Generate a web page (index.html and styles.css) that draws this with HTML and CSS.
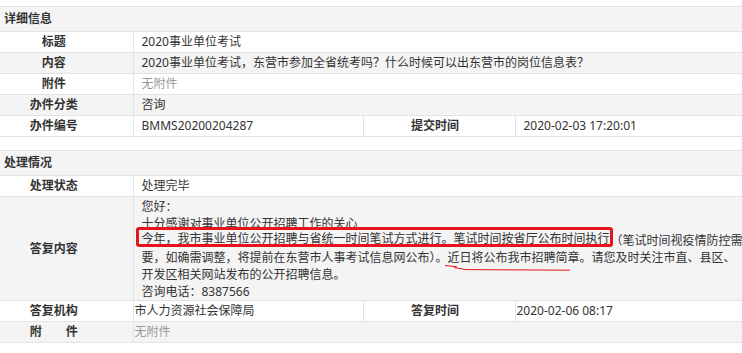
FILE: index.html
```html
<!DOCTYPE html>
<html lang="zh-CN">
<head>
  <meta charset="UTF-8" />
  <title>办件详情</title>
  <meta name="viewport" content="width=device-width, initial-scale=1.0" />
  <link rel="stylesheet" href="styles.css">
</head>
<body>

  <!-- 详细信息 -->
  <table class="grid">
    <colgroup>
      <col class="col-label"><col class="col-value"><col class="col-label2"><col>
    </colgroup>
    <tr class="head"><th colspan="4">详细信息</th></tr>
    <tr>
      <td class="label">标题</td>
      <td colspan="3">2020事业单位考试</td>
    </tr>
    <tr class="alt">
      <td class="label">内容</td>
      <td colspan="3">2020事业单位考试，东营市参加全省统考吗？什么时候可以出东营市的岗位信息表？</td>
    </tr>
    <tr>
      <td class="label">附件</td>
      <td colspan="3" class="muted">无附件</td>
    </tr>
    <tr class="alt">
      <td class="label">办件分类</td>
      <td colspan="3">咨询</td>
    </tr>
    <tr>
      <td class="label">办件编号</td>
      <td>BMMS20200204287</td>
      <td class="label2">提交时间</td>
      <td>2020-02-03 17:20:01</td>
    </tr>
  </table>

  <!-- 处理情况 -->
  <table class="grid second">
    <colgroup>
      <col class="col-label"><col class="col-value"><col class="col-label2"><col>
    </colgroup>
    <tr class="head"><th colspan="4">处理情况</th></tr>
    <tr>
      <td class="label">处理状态</td>
      <td colspan="3">处理完毕</td>
    </tr>
    <tr class="alt">
      <td class="label">答复内容</td>
      <td colspan="3" class="reply">您好：<br>十分感谢对事业单位公开招聘工作的关心<br><span class="mark">今年，我市事业单位公开招聘与省统一时间笔试方式进行。笔试时间按省厅公布时间执行</span>（笔试时间视疫情防控需<br>要，如确需调整，将提前在东营市人事考试信息网公布）。<span class="scribble">近日将公布我市招聘简章<svg class="scribble-line" width="130" height="10" viewBox="0 0 130 10"><path d="M1 1.5 L13 2.8 M10 3.6 L22 5.6 L126 6.2" fill="none" stroke="#e8141c" stroke-width="1"/></svg></span>。请您及时关注市直、县区、<br>开发区相关网站发布的公开招聘信息。<br>咨询电话：8387566</td>
    </tr>
    <tr>
      <td class="label">答复机构</td>
      <td class="tight">市人力资源社会保障局</td>
      <td class="label2">答复时间</td>
      <td class="tight">2020-02-06 08:17</td>
    </tr>
    <tr class="alt">
      <td class="label">附&emsp;&emsp;件</td>
      <td colspan="3" class="tight muted">无附件</td>
    </tr>
  </table>

</body>
</html>
```

FILE: styles.css
```css
body {
  margin: 0;
  padding-top: 6px;
  background: #fff;
  color: #333;
  font-family: "Noto Sans", "Noto Sans CJK SC", sans-serif;
  font-size: 12px;
  overflow: hidden;
}
.grid {
  width: 742px;
  border-collapse: collapse;
  table-layout: fixed;
}
.grid.second {
  margin-top: 13px;
}
.col-label {
  width: 133px;
}
.col-value {
  width: 230px;
}
.col-label2 {
  width: 152px;
}
th, td {
  border-top: 1px solid #e3e3e3;
  border-bottom: 1px solid #e3e3e3;
  height: 20px;
  line-height: 20px;
  padding: 0 0 0 8px;
  text-align: left;
  white-space: nowrap;
  overflow: hidden;
}
td + td {
  border-left: 1px solid #e3e3e3;
}
.head th {
  height: 24px;
  background: #f4f4f4;
  padding-left: 4px;
  font-weight: bold;
}
.alt td {
  background: #f4f4f4;
}
.label {
  text-align: center;
  font-weight: bold;
  padding: 0 25px 0 0;
}
.label2 {
  text-align: center;
  font-weight: bold;
  padding: 0 8px 0 0;
}
.muted {
  color: #999;
}
.tight {
  padding-left: 1px;
}
.reply {
  vertical-align: top;
  line-height: 17px;
  height: 102px;
  padding-top: 1px;
}
/* red frame pasted over the key sentence, sits a little high */
.mark {
  display: inline-block;
  vertical-align: 2px;
  line-height: 9px;
  padding: 4px 0 1px 3px;
  margin: -5px -2px -5px -6px;
  border: 3px solid #e8141c;
  border-radius: 3px;
  background: #f4f4f4;
}
.scribble {
  position: relative;
}
.scribble-line {
  position: absolute;
  left: -4px;
  top: 15px;
}
```
